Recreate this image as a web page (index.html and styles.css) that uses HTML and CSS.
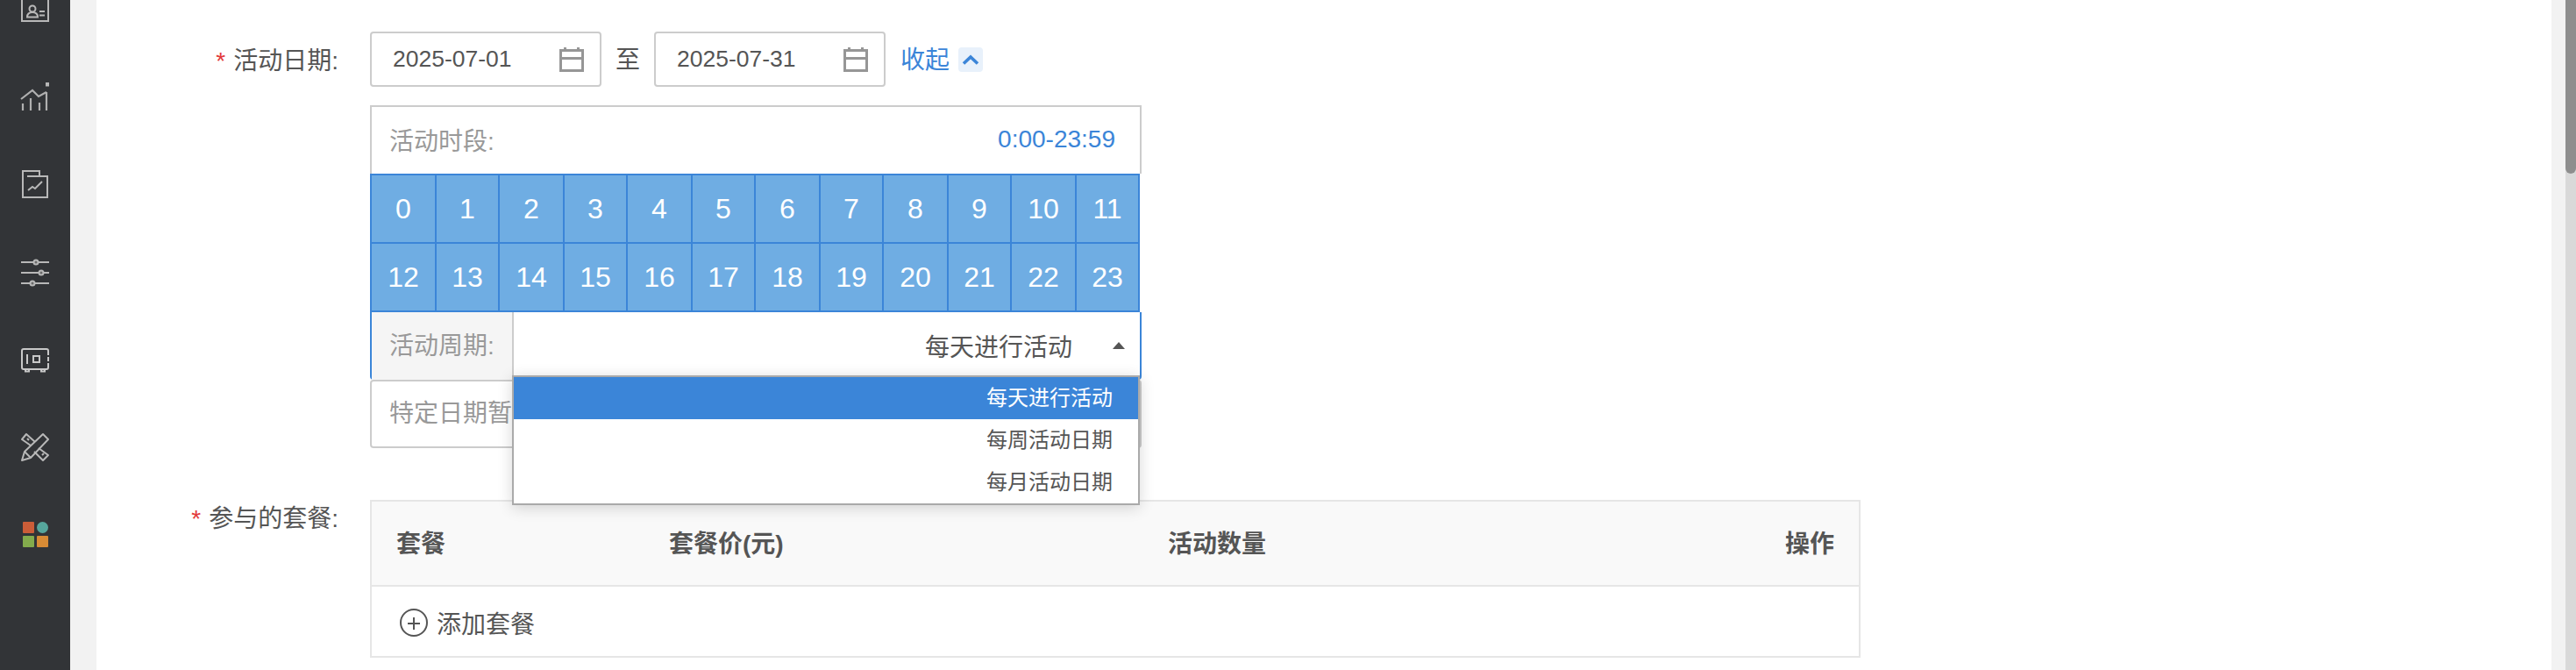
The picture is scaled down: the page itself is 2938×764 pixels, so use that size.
FILE: index.html
```html
<!DOCTYPE html>
<html lang="zh-CN">
<head>
    <meta charset="UTF-8">
    <title>活动设置</title>
    <link rel="stylesheet" href="styles.css">
</head>
<body>
    <div class="sidebar">
        <svg class="nav-icon" viewBox="0 0 32 32" fill="none" stroke="#b8b8b8" stroke-width="2">
            <path d="M1 -8V30H31V-8"/><rect x="11" y="2" width="11" height="4" fill="#b8b8b8" stroke="none" rx="2"/>
            <circle cx="13" cy="16" r="3.5"/><path d="M7 25.5c0-4 3-5.5 6-5.5s6 1.5 6 5.5z"/><path d="M21 19h6M21 23.5h6"/>
        </svg>
        <svg class="nav-icon" viewBox="0 0 32 32" fill="none" stroke="#b0b0b0" stroke-width="2.2">
            <path d="M0 19L13 9l7 7 9-5"/><path d="M2 24v8M11 18v14M21 23v9M29 11v21"/>
            <rect x="28" y="0" width="4" height="4.5" fill="#b8b8b8" stroke="none"/>
        </svg>
        <svg class="nav-icon" viewBox="0 0 32 32" fill="none" stroke="#b8b8b8" stroke-width="2">
            <path d="M2 1H21V7H30V31H2Z"/><path d="M7 7H21"/><path d="M8 23l5-4 3 2 8-8"/>
        </svg>
        <svg class="nav-icon" viewBox="0 0 32 32" fill="none" stroke="#b8b8b8" stroke-width="2">
            <path d="M0 5h32M0 17h32M0 29h32"/>
            <circle cx="17" cy="5" r="2.5" fill="#6a6a6a"/><circle cx="23" cy="17" r="2.5" fill="#6a6a6a"/><circle cx="13" cy="29" r="2.5" fill="#6a6a6a"/>
        </svg>
        <svg class="nav-icon" viewBox="0 0 32 32" fill="none" stroke="#c8c8c8" stroke-width="2">
            <rect x="1" y="4" width="30" height="23" rx="2"/><path d="M5 27v2.5h4V27M23 27v2.5h4V27"/>
            <path d="M7 10v11"/><rect x="14" y="12" width="7" height="7"/>
            <path d="M31 11v2M31 18v2" stroke="#323437" stroke-width="2.5"/>
        </svg>
        <svg class="nav-icon" viewBox="0 0 32 32" fill="none" stroke="#b8b8b8" stroke-width="2" stroke-linejoin="round">
            <path d="M1 31l3-10L25 1l6 6-20 21z"/><path d="M4 21l7 7"/>
            <path d="M11 14L1 7l5-6 10 9"/><path d="M20 17l11 8-6 6-10-10"/>
            <path d="M7 6l2 2M24 25l2-2"/>
        </svg>
        <div class="nav-apps">
            <span class="app app-red"></span><span class="app app-teal"></span>
            <span class="app app-green"></span><span class="app app-orange"></span>
        </div>
    </div>

    <div class="gutter"></div>

    <div class="content">
        <div class="form-row">
            <label class="form-label"><em>*</em>活动日期:</label>
            <div class="form-field">
                <div class="date-line">
                    <div class="date-input">
                        <span>2025-07-01</span>
                        <svg class="cal-icon" viewBox="0 0 28 28"><path d="M0 2h5V0h3v2h12V0h3v2h5v26H0zM3 5v6h22V5zm0 9v11h22V14z" fill="#969696" fill-rule="evenodd"/></svg>
                    </div>
                    <span class="date-sep">至</span>
                    <div class="date-input">
                        <span>2025-07-31</span>
                        <svg class="cal-icon" viewBox="0 0 28 28"><path d="M0 2h5V0h3v2h12V0h3v2h5v26H0zM3 5v6h22V5zm0 9v11h22V14z" fill="#969696" fill-rule="evenodd"/></svg>
                    </div>
                    <a class="collapse-link">收起</a>
                    <span class="collapse-icon">
                        <svg viewBox="0 0 20 12" fill="none" stroke="#3b85d8" stroke-width="3.6"><path d="M2 10.5L10 3l8 7.5"/></svg>
                    </span>
                </div>

                <div class="time-panel">
                    <div class="time-head">
                        <span class="muted">活动时段:</span>
                        <span class="time-value">0:00-23:59</span>
                    </div>
                    <div class="hour-grid" id="hourGrid"></div>
                    <div class="cycle-row">
                        <div class="cycle-label muted">活动周期:</div>
                        <div class="cycle-select">
                            <span>每天进行活动</span>
                            <i class="caret-up"></i>
                            <ul class="select-menu">
                                <li class="active">每天进行活动</li>
                                <li>每周活动日期</li>
                                <li>每月活动日期</li>
                            </ul>
                        </div>
                    </div>
                    <div class="date-note muted">特定日期暂不支持设置</div>
                </div>
            </div>
        </div>

        <div class="form-row form-row-table">
            <label class="form-label"><em>*</em>参与的套餐:</label>
            <div class="form-field">
                <div class="plan-table">
                    <div class="plan-head">
                        <span class="col-name">套餐</span>
                        <span class="col-price">套餐价(元)</span>
                        <span class="col-num">活动数量</span>
                        <span class="col-op">操作</span>
                    </div>
                    <div class="plan-body">
                        <svg class="add-icon" viewBox="0 0 32 32" fill="none" stroke="#555" stroke-width="2"><circle cx="16" cy="16" r="15"/><path d="M9 17h14M16 10v14"/></svg>
                        <span>添加套餐</span>
                    </div>
                </div>
            </div>
        </div>
    </div>

    <div class="gutter-right"></div>
    <div class="scrollbar"><div class="scroll-thumb"></div></div>

    <script>
        var grid = document.getElementById('hourGrid');
        for (var h = 0; h < 24; h++) {
            var cell = document.createElement('div');
            cell.className = 'hour-cell';
            cell.textContent = h;
            grid.appendChild(cell);
        }
    </script>
</body>
</html>
```

FILE: styles.css
```css
body {
    margin: 0;
    height: 764px;
    overflow: hidden;
    display: flex;
    font-family: "Liberation Sans", "Noto Sans CJK SC", sans-serif;
    font-size: 28px;
    color: #555;
    background-color: #fff;
}
.sidebar {
    width: 80px;
    flex: none;
    background-color: #323437;
    display: flex;
    flex-direction: column;
    align-items: center;
    gap: 68px;
    height: 764px;
}
.nav-icon {
    width: 32px;
    height: 32px;
    flex: none;
    overflow: visible;
}
.nav-icon:first-child {
    margin-top: -6px;
}
.nav-apps {
    width: 29px;
    height: 30px;
    margin-top: 1px;
    display: grid;
    grid-template-columns: 13px 13px;
    grid-template-rows: 13px 13px;
    gap: 3px;
    flex: none;
}
.app {
    display: block;
    border-radius: 1px;
}
.app-red { background-color: #cb5d38; }
.app-teal { background-color: #56a69c; border-radius: 50%; }
.app-green { background-color: #83ab4c; }
.app-orange { background-color: #d88b35; }
.gutter {
    width: 30px;
    flex: none;
    background-color: #f2f2f2;
}
.content {
    flex: 1;
    min-width: 0;
    padding-top: 36px;
}
.gutter-right {
    width: 16px;
    flex: none;
    background-color: #f2f2f2;
}
.scrollbar {
    width: 12px;
    flex: none;
    background-color: #d9d9d9;
}
.scroll-thumb {
    height: 198px;
    background-color: #8e8e8e;
    border-radius: 0 0 6px 6px;
}
.form-row {
    display: flex;
}
.form-row-table {
    margin-top: 59px;
}
.form-label {
    width: 276px;
    flex: none;
    text-align: right;
    line-height: 67px;
}
.form-row-table .form-label {
    line-height: 40px;
    margin-top: 2px;
}
.form-label em {
    color: #e23b3b;
    font-style: normal;
    margin-right: 9px;
}
.form-field {
    margin-left: 36px;
}
.date-line {
    display: flex;
    align-items: center;
    height: 63px;
}
.date-input {
    width: 264px;
    height: 63px;
    box-sizing: border-box;
    border: 2px solid #ccc;
    border-radius: 4px;
    padding: 0 18px 0 24px;
    display: flex;
    align-items: center;
    justify-content: space-between;
    font-size: 26.5px;
}
.cal-icon {
    width: 28px;
    height: 28px;
}
.date-sep {
    width: 60px;
    text-align: center;
    padding-bottom: 3px;
}
.collapse-link {
    color: #3b85d8;
    margin-left: 17px;
    padding-bottom: 3px;
}
.collapse-icon {
    width: 28px;
    height: 28px;
    margin-left: 10px;
    border-radius: 4px;
    background-color: #e8f1fb;
    display: flex;
    align-items: center;
    justify-content: center;
}
.collapse-icon svg {
    width: 20px;
    height: 12px;
}
.time-panel {
    width: 880px;
    margin-top: 21px;
}
.muted {
    color: #999;
}
.time-head {
    height: 78px;
    box-sizing: border-box;
    border: 2px solid #ccc;
    border-bottom: none;
    padding: 0 28px 2px 20px;
    display: flex;
    align-items: center;
    justify-content: space-between;
}
.time-value {
    color: #3b85d8;
}
.hour-grid {
    width: 878px;
    display: grid;
    grid-template-columns: repeat(6, 74px 72px);
    grid-template-rows: 78px 78px;
    box-sizing: border-box;
    border-top: 2px solid #3b85d8;
    border-left: 2px solid #3b85d8;
}
.hour-cell {
    background-color: #6fade3;
    color: #fff;
    font-size: 32px;
    border-right: 2px solid #3b85d8;
    border-bottom: 2px solid #3b85d8;
    display: flex;
    align-items: center;
    justify-content: center;
}
.cycle-row {
    display: flex;
    height: 77px;
    box-sizing: border-box;
    border-left: 2px solid #3b85d8;
    border-right: 2px solid #3b85d8;
    border-bottom-left-radius: 4px;
    border-bottom-right-radius: 4px;
}
.cycle-label {
    width: 162px;
    flex: none;
    box-sizing: border-box;
    background-color: #f5f5f5;
    border-right: 2px solid #ccc;
    padding-left: 20px;
    line-height: 77px;
}
.cycle-select {
    flex: 1;
    position: relative;
    display: flex;
    align-items: center;
    justify-content: flex-end;
    padding: 0 17px 2px 0;
}
.caret-up {
    width: 0;
    height: 0;
    margin-left: 46px;
    border-left: 7px solid transparent;
    border-right: 7px solid transparent;
    border-bottom: 8px solid #555;
}
.select-menu {
    position: absolute;
    left: -2px;
    right: 0;
    top: 72px;
    margin: 0;
    padding: 0;
    list-style: none;
    background-color: #fff;
    border: 2px solid #aaa;
    box-shadow: 0 3px 16px rgba(0, 0, 0, 0.16);
    font-size: 24px;
    z-index: 5;
}
.select-menu li {
    height: 48px;
    line-height: 47px;
    text-align: right;
    padding-right: 29px;
}
.select-menu li.active {
    background-color: #3b85d8;
    color: #fff;
}
.date-note {
    height: 78px;
    box-sizing: border-box;
    border: 2px solid #ccc;
    border-radius: 4px;
    padding-left: 20px;
    line-height: 74px;
    white-space: nowrap;
}
.plan-table {
    width: 1700px;
    box-sizing: border-box;
    border: 2px solid #e6e6e6;
}
.plan-head {
    height: 97px;
    box-sizing: border-box;
    background-color: #f9f9f9;
    border-bottom: 2px solid #e6e6e6;
    display: flex;
    align-items: center;
    font-weight: bold;
    padding: 0 28px 3px;
}
.col-name { width: 311px; }
.col-price { width: 569px; }
.col-num { flex: 1; }
.plan-body {
    height: 79px;
    box-sizing: border-box;
    display: flex;
    align-items: center;
    gap: 10px;
    padding: 2px 0 0 32px;
}
.add-icon {
    width: 32px;
    height: 32px;
}
```
